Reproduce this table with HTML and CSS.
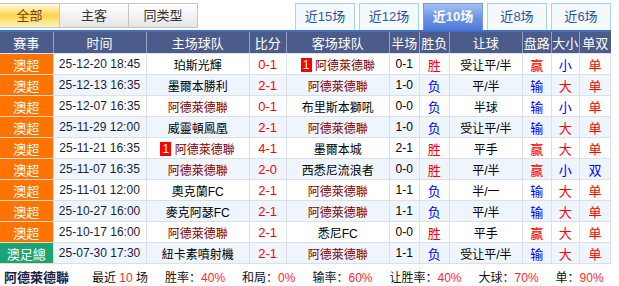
FILE: index.html
```html
<!DOCTYPE html>
<html lang="zh">
<head>
<meta charset="utf-8">
<link rel="stylesheet" href="styles.css">
</head>
<body>
<div class="wrap">
  <div class="tabs">
    <div class="ltabs">
      <div class="ltab on">全部</div>
      <div class="ltab">主客</div>
      <div class="ltab">同类型</div>
    </div>
    <div class="rtabs">
      <div class="rtab">近<span class="n">15</span>场</div>
      <div class="rtab">近<span class="n">12</span>场</div>
      <div class="rtab on">近<span class="n">10</span>场</div>
      <div class="rtab">近<span class="n">8</span>场</div>
      <div class="rtab">近<span class="n">6</span>场</div>
    </div>
  </div>
  <div class="bar"></div>
  <table class="tbl">
    <colgroup>
      <col class="c1"><col class="c2"><col class="c3"><col class="c4"><col class="c5"><col class="c6"><col class="c7"><col class="c8"><col class="c9"><col class="c10"><col class="c11">
    </colgroup>
    <thead>
      <tr><th>赛事</th><th>时间</th><th>主场球队</th><th>比分</th><th>客场球队</th><th>半场</th><th>胜负</th><th>让球</th><th>盘路</th><th>大小</th><th>单双</th></tr>
    </thead>
    <tbody>
      <tr><td class="lg">澳超</td><td class="dt">25-12-20 18:45</td><td>珀斯光輝</td><td class="sc">0-1</td><td class="me"><span class="badge">1</span> 阿德萊德聯</td><td>0-1</td><td class="r">胜</td><td>受让平/半</td><td class="r">赢</td><td class="b">小</td><td class="r">单</td></tr>
      <tr class="alt"><td class="lg">澳超</td><td class="dt">25-12-13 16:35</td><td>墨爾本勝利</td><td class="sc">2-1</td><td class="me">阿德萊德聯</td><td>1-0</td><td class="b">负</td><td>平/半</td><td class="b">输</td><td class="r">大</td><td class="r">单</td></tr>
      <tr><td class="lg">澳超</td><td class="dt">25-12-07 16:35</td><td class="me">阿德萊德聯</td><td class="sc">0-1</td><td>布里斯本獅吼</td><td>0-0</td><td class="b">负</td><td>半球</td><td class="b">输</td><td class="b">小</td><td class="r">单</td></tr>
      <tr class="alt"><td class="lg">澳超</td><td class="dt">25-11-29 12:00</td><td>威靈頓鳳凰</td><td class="sc">2-1</td><td class="me">阿德萊德聯</td><td>1-0</td><td class="b">负</td><td>受让平/半</td><td class="b">输</td><td class="r">大</td><td class="r">单</td></tr>
      <tr><td class="lg">澳超</td><td class="dt">25-11-21 16:35</td><td class="me"><span class="badge">1</span> 阿德萊德聯</td><td class="sc">4-1</td><td>墨爾本城</td><td>2-1</td><td class="r">胜</td><td>平手</td><td class="r">赢</td><td class="r">大</td><td class="r">单</td></tr>
      <tr class="alt"><td class="lg">澳超</td><td class="dt">25-11-07 16:35</td><td class="me">阿德萊德聯</td><td class="sc">2-0</td><td>西悉尼流浪者</td><td>0-0</td><td class="r">胜</td><td>平/半</td><td class="r">赢</td><td class="b">小</td><td class="b">双</td></tr>
      <tr><td class="lg">澳超</td><td class="dt">25-11-01 12:00</td><td>奧克蘭FC</td><td class="sc">2-1</td><td class="me">阿德萊德聯</td><td>1-1</td><td class="b">负</td><td>半/一</td><td class="b">输</td><td class="r">大</td><td class="r">单</td></tr>
      <tr class="alt"><td class="lg">澳超</td><td class="dt">25-10-27 16:00</td><td>麥克阿瑟FC</td><td class="sc">2-1</td><td class="me">阿德萊德聯</td><td>1-1</td><td class="b">负</td><td>平/半</td><td class="b">输</td><td class="r">大</td><td class="r">单</td></tr>
      <tr><td class="lg">澳超</td><td class="dt">25-10-17 16:00</td><td class="me">阿德萊德聯</td><td class="sc">2-1</td><td>悉尼FC</td><td>0-0</td><td class="r">胜</td><td>平手</td><td class="r">赢</td><td class="r">大</td><td class="r">单</td></tr>
      <tr class="alt"><td class="lg cup">澳足總</td><td class="dt">25-07-30 17:30</td><td>紐卡素噴射機</td><td class="sc">2-1</td><td class="me">阿德萊德聯</td><td>1-1</td><td class="b">负</td><td>受让平/半</td><td class="b">输</td><td class="r">大</td><td class="r">单</td></tr>
    </tbody>
  </table>
  <div class="foot">
    <span class="team">阿德萊德聯</span>
    <span class="it">最近 <em>10</em> 场</span>
    <span class="it">胜率：<em>40%</em></span>
    <span class="it">和局：<em>0%</em></span>
    <span class="it">输率：<em>60%</em></span>
    <span class="it">让胜率：<em>40%</em></span>
    <span class="it">大球：<em>70%</em></span>
    <span class="it">单：<em>90%</em></span>
  </div>
</div>
</body>
</html>
```

FILE: styles.css
```css
html, body {
  margin: 0;
  padding: 0;
  background: #fff;
}
body {
  font-family: "Liberation Sans", Arial, "Noto Sans CJK SC", sans-serif;
  font-size: 12px;
  color: #000;
}
.wrap {
  width: 611px;
}
.tabs {
  display: flex;
  justify-content: space-between;
  align-items: flex-start;
  height: 30px;
}
.ltabs {
  display: flex;
  margin-top: 3px;
}
.ltab {
  box-sizing: border-box;
  width: 69px;
  height: 25px;
  line-height: 23px;
  text-align: center;
  font-size: 13px;
  color: #333;
  border: 1px solid #c6c6c6;
  border-left: none;
  background: linear-gradient(#ffffff, #f3f3f3 50%, #e4e4e4);
}
.ltab.on {
  width: 60px;
  border-left: none;
  color: #8a3a00;
  background: linear-gradient(#fffbe8, #ffd54a 50%, #fff3c0);
}
.rtabs {
  display: flex;
  gap: 4px;
  margin-top: 3px;
}
.rtab {
  box-sizing: border-box;
  width: 60px;
  height: 27px;
  line-height: 25px;
  text-align: center;
  font-size: 13px;
  color: #2a4f8f;
  border: 1px solid #a9d3e6;
  border-bottom: none;
  background: #f4f9fe;
}
.rtab .n {
  color: #3a5aa0;
}
.rtab.on {
  color: #fff;
  font-weight: bold;
  border: 1px solid #6f9be2;
  border-bottom: none;
  background: linear-gradient(#a6c2f4, #6f97e6 50%, #4c79d6);
}
.rtab.on .n {
  color: #fff;
}
.bar {
  height: 2px;
  background: #3f6fc6;
}
.tbl {
  width: 611px;
  border-collapse: collapse;
  table-layout: fixed;
}
.c1 { width: 53px; }
.c2 { width: 93px; }
.c3 { width: 103px; }
.c4 { width: 37px; }
.c5 { width: 103px; }
.c6 { width: 30px; }
.c7 { width: 30px; }
.c8 { width: 73px; }
.c9 { width: 29px; }
.c10 { width: 28px; }
.c11 { width: 31px; }
.tbl th {
  height: 21px;
  padding: 0;
  background: #4b5c8b;
  color: #fff;
  font-weight: normal;
  font-size: 13px;
  border-left: 1px solid #95a2c0;
  border-bottom: 1px solid #dfe3ea;
  text-align: center;
  white-space: nowrap;
}
.tbl th:first-child {
  border-left: none;
}
.tbl td {
  height: 20px;
  padding: 0;
  text-align: center;
  white-space: nowrap;
  overflow: hidden;
  border: 1px solid #dcdfe6;
  font-size: 12px;
}
.tbl tr td:first-child {
  border-left: none;
}
.tbl tr.alt td {
  background: #eff5fd;
}
.tbl td.lg,
.tbl tr.alt td.lg {
  background: #ff7400;
  color: #fff;
  font-size: 13px;
  border-color: #f3d8c0;
}
.tbl td.lg.cup,
.tbl tr.alt td.lg.cup {
  background: #1ba373;
}
.tbl td.dt {
  font-size: 12px;
  color: #1c1c3a;
}
.tbl td.sc {
  color: #ff0000;
  font-size: 13px;
}
.tbl td.me {
  color: #800000;
}
.badge {
  display: inline-block;
  width: 11px;
  height: 14px;
  line-height: 14px;
  background: #ff0000;
  color: #fff;
  font-size: 12px;
  text-align: center;
  vertical-align: 1px;
}
.tbl td.r { color: #ff0000; font-size: 13px; }
.tbl td.b { color: #0000ff; font-size: 13px; }
.foot {
  display: flex;
  align-items: center;
  height: 24px;
  padding-left: 4px;
  font-size: 12px;
  color: #111;
  white-space: nowrap;
}
.foot .team {
  flex: none;
  font-weight: bold;
  font-size: 13px;
  color: #1c1c3c;
  width: 88px;
}
.foot .it {
  flex: none;
  margin-right: 17px;
}
.foot em {
  font-style: normal;
  color: #ff2a2a;
}
```
